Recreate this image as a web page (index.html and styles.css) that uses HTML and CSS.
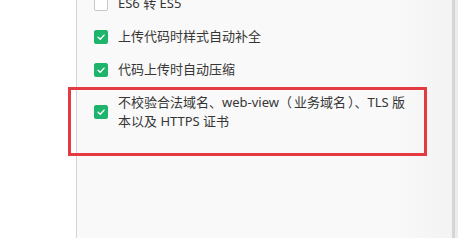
FILE: index.html
```html
<!DOCTYPE html>
<html lang="zh-CN">
<head>
<meta charset="utf-8">
<link rel="stylesheet" href="styles.css">
</head>
<body>
<div class="window">
  <div class="side"></div>
  <div class="panel">
    <ul class="options">
      <li class="option">
        <span class="box"></span>
        <span class="label">ES6 转 ES5</span>
      </li>
      <li class="option">
        <span class="box checked"><svg viewBox="0 0 14 14"><path d="M3.6 7.2 L6.1 9.6 L10.6 4.8" /></svg></span>
        <span class="label">上传代码时样式自动补全</span>
      </li>
      <li class="option">
        <span class="box checked"><svg viewBox="0 0 14 14"><path d="M3.6 7.2 L6.1 9.6 L10.6 4.8" /></svg></span>
        <span class="label">代码上传时自动压缩</span>
      </li>
      <li class="option highlighted">
        <span class="box checked"><svg viewBox="0 0 14 14"><path d="M3.6 7.2 L6.1 9.6 L10.6 4.8" /></svg></span>
        <span class="label wrap">不校验合法域名、web-view<span class="po">（</span>业务域名<span class="pc">）</span>、TLS 版本以及 HTTPS 证书</span>
        <span class="mark"></span>
      </li>
    </ul>
  </div>
  <div class="scroll">
    <div class="track"></div>
    <div class="edge"></div>
  </div>
</div>
</body>
</html>
```

FILE: styles.css
```css
html, body {
  margin: 0;
  padding: 0;
  background: #ffffff;
}

.window {
  display: flex;
  width: 458px;
  height: 238px;
  overflow: hidden;
  font-family: "Noto Sans", "Noto Sans CJK SC", sans-serif;
  font-size: 13px;
  color: #363636;
}

.side {
  width: 76px;
  flex: none;
  background: #ffffff;
}

.panel {
  flex: 1;
  border-left: 1px solid #d4d4d4;
  background: linear-gradient(to right, #f9f9f9 0%, #f9f9f9 85%, #f3f3f3 100%);
  padding-left: 17px;
}

.options {
  list-style: none;
  margin: -13px 0 0 0;
  padding: 0;
}

.option {
  position: relative;
  display: flex;
  align-items: center;
  gap: 10px;
  padding: 7px 0;
  line-height: 19px;
}

.box {
  width: 12px;
  height: 12px;
  flex: none;
  border: 1px solid #c9c9c9;
  border-radius: 2px;
  background: #ffffff;
  display: flex;
}

.box.checked {
  border-color: #1fb46c;
  background: #1fb46c;
}

.box svg {
  width: 12px;
  height: 12px;
}

.box svg path {
  fill: none;
  stroke: #ffffff;
  stroke-width: 1.6;
  stroke-linecap: round;
  stroke-linejoin: round;
}

.label {
  white-space: nowrap;
}

.label.wrap {
  white-space: normal;
  width: 296px;
}

.po {
  margin-right: 2px;
}

.pc {
  margin-left: 2px;
}

.mark {
  position: absolute;
  left: -26px;
  top: 1px;
  width: 353px;
  height: 63px;
  border: 3px solid #e43a42;
  pointer-events: none;
}

.scroll {
  display: flex;
  flex: none;
}

.track {
  width: 3px;
  background: #d5d5d5;
}

.edge {
  width: 3px;
  background: #ececec;
}
```
